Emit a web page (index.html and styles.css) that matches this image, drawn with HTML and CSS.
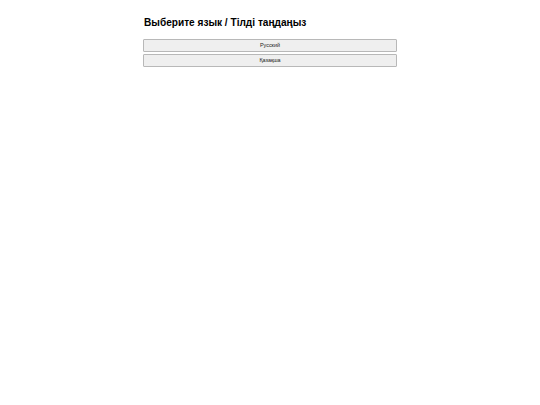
FILE: index.html
```html
<!DOCTYPE html>
<html lang="ru">
<head>
<meta charset="utf-8">
<title>Выберите язык</title>
<link rel="stylesheet" href="styles.css">
</head>
<body>
<div class="wrap">
  <h1 class="title">Выберите язык / Тілді таңдаңыз</h1>
  <div class="list">
    <button class="btn">Русский</button>
    <button class="btn">Қазақша</button>
  </div>
</div>
</body>
</html>
```
FILE: styles.css
```css
html, body {
  margin: 0;
  padding: 0;
  background: #ffffff;
}
body {
  font-family: "Liberation Sans", Arial, sans-serif;
  color: #000;
}
.wrap {
  width: 254px;
  margin: 0 auto;
  padding-top: 16px;
}
.title {
  margin: 0 0 0 1px;
  font-size: 10.1px;
  font-weight: bold;
  line-height: 14px;
}
.list {
  margin-top: 9px;
  display: flex;
  flex-direction: column;
  gap: 2px;
}
.btn {
  display: block;
  width: 254px;
  height: 13px;
  padding: 0;
  margin: 0;
  border: 1px solid #b8b8b8;
  border-radius: 1px;
  background: #efefef;
  font-family: "Liberation Sans", Arial, sans-serif;
  font-size: 5.4px;
  color: #222;
  text-align: center;
  line-height: 11px;
}
```
